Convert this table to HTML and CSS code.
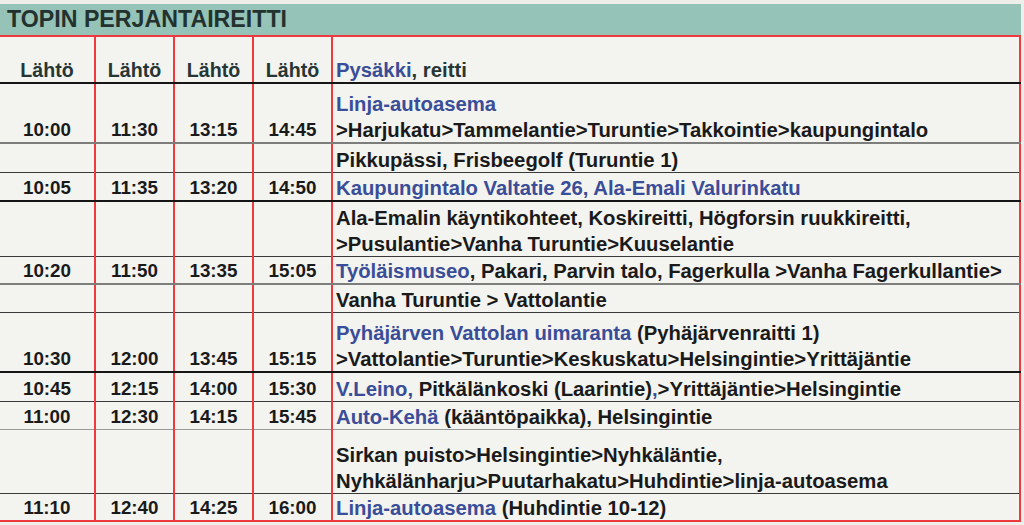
FILE: index.html
```html
<!DOCTYPE html>
<html lang="fi">
<head>
<meta charset="utf-8">
<title>Topin perjantaireitti</title>
<link rel="stylesheet" href="styles.css">
</head>
<body>
<div class="sheet">
  <div class="title">TOPIN PERJANTAIREITTI</div>
  <table class="timetable">
    <colgroup>
      <col class="c-time"><col class="c-time2"><col class="c-time2"><col class="c-time2"><col class="c-route">
    </colgroup>
    <tr class="r-head b-black">
      <th>Lähtö</th><th>Lähtö</th><th>Lähtö</th><th>Lähtö</th>
      <th class="route"><span class="blue">Pysäkki</span>, reitti</th>
    </tr>
    <tr class="r1 b-gray">
      <td>10:00</td><td>11:30</td><td>13:15</td><td>14:45</td>
      <td class="route"><span class="line blue">Linja-autoasema</span><span class="line">&gt;Harjukatu&gt;Tammelantie&gt;Turuntie&gt;Takkointie&gt;kaupungintalo</span></td>
    </tr>
    <tr class="r2 b-thin">
      <td></td><td></td><td></td><td></td>
      <td class="route">Pikkupässi, Frisbeegolf (Turuntie 1)</td>
    </tr>
    <tr class="r3 b-black">
      <td>10:05</td><td>11:35</td><td>13:20</td><td>14:50</td>
      <td class="route"><span class="blue">Kaupungintalo Valtatie 26, Ala-Emali Valurinkatu</span></td>
    </tr>
    <tr class="r4 b-thin">
      <td></td><td></td><td></td><td></td>
      <td class="route"><span class="line">Ala-Emalin käyntikohteet, Koskireitti, Högforsin ruukkireitti,</span><span class="line">&gt;Pusulantie&gt;Vanha Turuntie&gt;Kuuselantie</span></td>
    </tr>
    <tr class="r5 b-gray">
      <td>10:20</td><td>11:50</td><td>13:35</td><td>15:05</td>
      <td class="route"><span class="blue">Työläismuseo</span>, Pakari, Parvin talo, Fagerkulla &gt;Vanha Fagerkullantie&gt;</td>
    </tr>
    <tr class="r6 b-thin">
      <td></td><td></td><td></td><td></td>
      <td class="route">Vanha Turuntie &gt; Vattolantie</td>
    </tr>
    <tr class="r7 b-black">
      <td>10:30</td><td>12:00</td><td>13:45</td><td>15:15</td>
      <td class="route"><span class="line"><span class="blue">Pyhäjärven Vattolan uimaranta</span> (Pyhäjärvenraitti 1)</span><span class="line">&gt;Vattolantie&gt;Turuntie&gt;Keskuskatu&gt;Helsingintie&gt;Yrittäjäntie</span></td>
    </tr>
    <tr class="r8 b-thin">
      <td>10:45</td><td>12:15</td><td>14:00</td><td>15:30</td>
      <td class="route"><span class="blue">V.Leino,</span> Pitkälänkoski (Laarintie)<span class="blue">,</span>&gt;Yrittäjäntie&gt;Helsingintie</td>
    </tr>
    <tr class="r9 b-light">
      <td>11:00</td><td>12:30</td><td>14:15</td><td>15:45</td>
      <td class="route"><span class="blue">Auto-Kehä</span> (kääntöpaikka), Helsingintie</td>
    </tr>
    <tr class="r10 b-thin">
      <td></td><td></td><td></td><td></td>
      <td class="route"><span class="line">Sirkan puisto&gt;Helsingintie&gt;Nyhkäläntie,</span><span class="line">Nyhkälänharju&gt;Puutarhakatu&gt;Huhdintie&gt;linja-autoasema</span></td>
    </tr>
    <tr class="r11 b-red">
      <td>11:10</td><td>12:40</td><td>14:25</td><td>16:00</td>
      <td class="route"><span class="blue">Linja-autoasema</span> (Huhdintie 10-12)</td>
    </tr>
  </table>
</div>
</body>
</html>
```

FILE: styles.css
```css
html, body {
  margin: 0;
  padding: 0;
  background: #eeeeea;
}

.sheet {
  width: 1024px;
  height: 525px;
  padding-top: 4px;
  box-sizing: border-box;
  font-family: "Liberation Sans", Arial, sans-serif;
  font-weight: bold;
  overflow: hidden;
}

.title {
  width: 1021px;
  height: 31px;
  background: #95c3b7;
  color: #23322f;
  font-size: 23.2px;
  line-height: 31px;
  padding-left: 7px;
  box-sizing: border-box;
  white-space: nowrap;
}

.timetable {
  border-collapse: collapse;
  table-layout: fixed;
  width: 1021px;
  background: #f3f3ef;
  border-top: 2px solid #ee3a3f;
  font-size: 18.8px;
  line-height: 22px;
  color: #1a1a1a;
}

.c-time { width: 95px; }
.c-time2 { width: 79px; }
.c-route { width: 688px; }

.timetable th,
.timetable td {
  padding: 0 0 1px 0;
  text-align: center;
  vertical-align: bottom;
  white-space: nowrap;
  border-right: 2px solid #ee3a3f;
}

.timetable th {
  color: #263635;
  font-weight: bold;
  font-size: 19.6px;
}

.timetable .route {
  text-align: left;
  padding-left: 3px;
  font-size: 20.3px;
}

.line { display: block; }
.line + .line { margin-top: 4px; }

.blue { color: #3a4d98; }

.b-black td, .b-black th { border-bottom: 2px solid #151515; }
.b-gray td { border-bottom: 2px solid #7d7d7b; }
.b-thin td { border-bottom: 1px solid #3a3a3a; }
.b-light td { border-bottom: 1px solid #9a9a98; }
.b-red td { border-bottom: 2px solid #ee3a3f; }

.r-head { height: 47px; }
.r1 { height: 60px; }
.r2 { height: 29px; }
.r3 { height: 29px; }
.r4 { height: 55px; }
.r5 { height: 28px; }
.r6 { height: 28px; }
.r7 { height: 60px; }
.r8 { height: 29px; }
.r9 { height: 28px; }
.r10 { height: 64px; }
.r11 { height: 28px; }
```
